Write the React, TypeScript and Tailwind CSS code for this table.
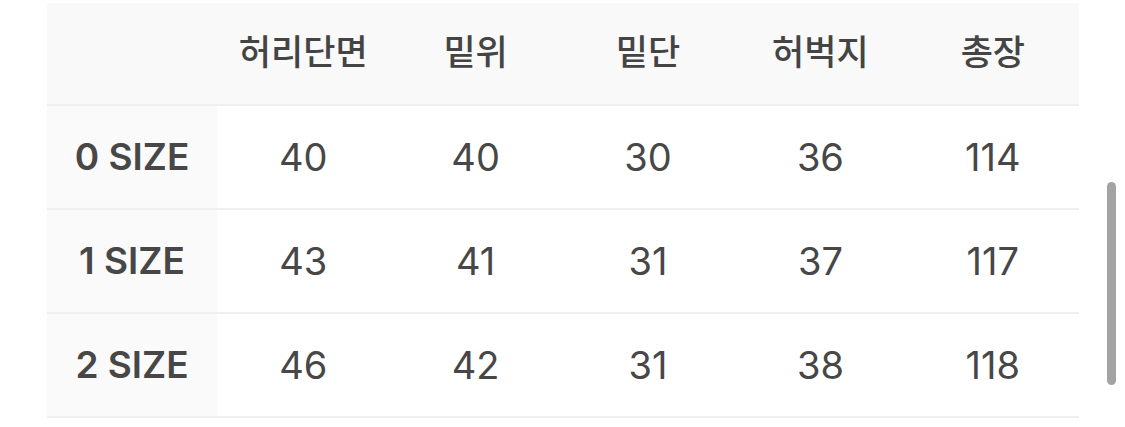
import React from "react";

const headers = ["허리단면", "밑위", "밑단", "허벅지", "총장"];
const rows: [string, string[]][] = [
  ["0 SIZE", ["40", "40", "30", "36", "114"]],
  ["1 SIZE", ["43", "41", "31", "37", "117"]],
  ["2 SIZE", ["46", "42", "31", "38", "118"]],
];

const font = { fontFamily: '"Inter", "Noto Sans CJK KR", sans-serif' };

export default function App() {
  return (
    <div className="relative w-[1125px] h-[427px] bg-white overflow-hidden" style={font}>
      <div className="pt-[3px] pl-[47px]">
        <div className="w-[1032px]">
          <div className="flex h-[103px] bg-[#f9f9f9] border-b-2 border-[#efefef]">
            <div className="w-[170px]" />
            {headers.map((h) => (
              <div
                key={h}
                className="flex-1 flex items-center justify-center text-[35px] font-medium text-[#444444] pb-[2px]"
              >
                {h}
              </div>
            ))}
          </div>
          {rows.map(([label, vals]) => (
            <div key={label} className="flex h-[104px] border-b-2 border-[#efefef]">
              <div className="w-[170px] bg-[#fafafa] flex items-center justify-center text-[37px] font-semibold text-[#474747]">
                {label}
              </div>
              {vals.map((v, i) => (
                <div
                  key={i}
                  className="flex-1 flex items-center justify-center text-[38px] font-normal text-[#474747]"
                >
                  {v}
                </div>
              ))}
            </div>
          ))}
        </div>
      </div>
      <div className="absolute left-[1107px] top-[182px] w-[9px] h-[203px] rounded-full bg-[#a3a3a3]" />
    </div>
  );
}
